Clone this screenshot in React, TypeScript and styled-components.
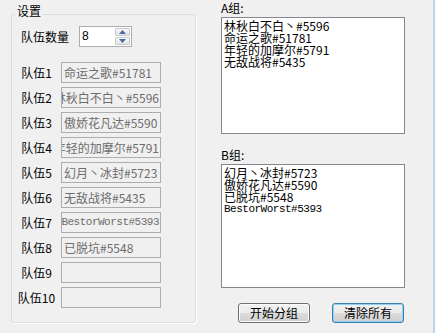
import React from 'react'
import styled, { createGlobalStyle } from 'styled-components'

const GlobalStyle = createGlobalStyle`
  html, body {
    margin: 0;
    padding: 0;
    background: #f0f0f0;
  }
  body {
    font-family: "Noto Sans CJK SC", "Liberation Sans", sans-serif;
    font-size: 12px;
    color: #000;
  }
`

const teams = [
  { name: '命运之歌#51781' },
  { name: '林秋白不白丶#5596' },
  { name: '傲娇花凡达#5590' },
  { name: '年轻的加摩尔#5791' },
  { name: '幻月丶冰封#5723' },
  { name: '无敌战将#5435' },
  { name: 'BestorWorst#5393', latin: true },
  { name: '已脱坑#5548' },
  { name: '' },
  { name: '' },
]

const groupA = [
  { name: '林秋白不白丶#5596' },
  { name: '命运之歌#51781' },
  { name: '年轻的加摩尔#5791' },
  { name: '无敌战将#5435' },
]

const groupB = [
  { name: '幻月丶冰封#5723' },
  { name: '傲娇花凡达#5590' },
  { name: '已脱坑#5548' },
  { name: 'BestorWorst#5393', latin: true },
]

const latinFont = '"Liberation Mono", monospace'
const cjkFont = '"Noto Sans CJK SC", "Liberation Sans", sans-serif'

const Window = styled.div`
  display: flex;
  gap: 25px;
  width: 435px;
  height: 333px;
  box-sizing: border-box;
  padding-left: 11px;
  border-right: 2px solid #bcd4ec;
  background: #f0f0f0;
  overflow: hidden;
`

const Group = styled.fieldset`
  margin: 5px 0 0;
  padding: 0;
  width: 185px;
  height: 318px;
  box-sizing: border-box;
  min-width: 0;
  border: 1px solid #d5dfe5;
  border-radius: 3px;
  box-shadow: 1px 1px 0 #ffffff;
`

const Legend = styled.legend`
  margin-left: 3px;
  padding: 0 2px 6px;
  font-size: 12px;
  line-height: 12px;
`

const GroupBody = styled.div`
  display: flex;
  flex-direction: column;
  gap: 15px;
  padding-top: 3px;
`

const SpinRow = styled.div`
  display: flex;
  align-items: center;
  gap: 10px;
  padding-left: 9px;
  height: 21px;
`

const SpinBox = styled.div`
  display: flex;
  width: 53px;
  height: 21px;
  box-sizing: border-box;
  border: 1px solid #abadb3;
  background: #ffffff;
`

const SpinValue = styled.div`
  flex: 1;
  padding-left: 2px;
  font-family: "Liberation Sans", sans-serif;
  font-size: 12px;
  line-height: 18px;
`

const SpinButtons = styled.div`
  display: flex;
  flex-direction: column;
  gap: 1px;
  width: 15px;
  padding: 1px 1px 1px 0;
`

const SpinButton = styled.div`
  flex: 1;
  display: flex;
  align-items: center;
  justify-content: center;
  border: 1px solid #c9c9c9;
  border-radius: 1px;
  background: linear-gradient(#f7f7f7, #e4e4e4);
`

const TeamList = styled.div`
  display: flex;
  flex-direction: column;
  gap: 4px;
`

const TeamRow = styled.div`
  display: flex;
  align-items: center;
  height: 21px;
`

const TeamLabel = styled.div`
  width: 49px;
  text-align: center;
  line-height: 14px;
`

const TeamField = styled.div<{ $latin?: boolean }>`
  display: flex;
  justify-content: flex-end;
  width: 100px;
  height: 21px;
  box-sizing: border-box;
  padding: 0 1px 0 2px;
  border: 1px solid #adadad;
  background: #f0f0f0;
  color: #6d6d6d;
  overflow: hidden;
  white-space: nowrap;
  font-family: ${p => (p.$latin ? latinFont : cjkFont)};
  font-size: ${p => (p.$latin ? 11 : 12)}px;
  letter-spacing: ${p => (p.$latin ? '-0.5px' : 'normal')};
  line-height: 19px;
`

const FieldText = styled.span`
  flex-shrink: 0;
`

const FieldSpacer = styled.span`
  flex: 1 1 0;
  min-width: 0;
`

const RightPane = styled.div`
  display: flex;
  flex-direction: column;
  width: 184px;
  padding-top: 2px;
`

const ListLabel = styled.div<{ $top?: number }>`
  margin-top: ${p => p.$top ?? 0}px;
  margin-bottom: 3px;
  line-height: 12px;
`

const ListBox = styled.div<{ $height: number }>`
  height: ${p => p.$height}px;
  box-sizing: border-box;
  padding: 2px 2px;
  border: 1px solid #828790;
  background: #ffffff;
`

const ListItem = styled.div<{ $latin?: boolean }>`
  height: 12px;
  line-height: 12px;
  white-space: nowrap;
  font-family: ${p => (p.$latin ? latinFont : cjkFont)};
  font-size: ${p => (p.$latin ? 11 : 12)}px;
  letter-spacing: ${p => (p.$latin ? '-0.5px' : 'normal')};
`

const ButtonRow = styled.div`
  display: flex;
  gap: 22px;
  margin-top: 15px;
  padding-left: 17px;
`

const Button = styled.button<{ $focused?: boolean }>`
  width: 72px;
  height: 20px;
  padding: 0;
  border: 1px solid ${p => (p.$focused ? '#3c7fb1' : '#707070')};
  border-radius: 3px;
  background: linear-gradient(#f2f2f2 0%, #ebebeb 50%, #dddddd 50%, #cfcfcf 100%);
  box-shadow: ${p => (p.$focused ? 'inset 0 0 0 1px #8ed0f2' : 'inset 0 0 0 1px #fcfcfc')};
  font-family: "Noto Sans CJK SC", sans-serif;
  font-size: 12px;
  line-height: 16px;
  color: #000;
`

const Arrow = ({ up }: { up?: boolean }) => (
  <svg width="7" height="4" viewBox="0 0 7 4">
    <path d={up ? 'M0 4 L3.5 0 L7 4 Z' : 'M0 0 L3.5 4 L7 0 Z'} fill="#4a6aa5" />
  </svg>
)

export default function App() {
  return (
    <Window>
      <GlobalStyle />
      <Group>
        <Legend>设置</Legend>
        <GroupBody>
          <SpinRow>
            <span>队伍数量</span>
            <SpinBox>
              <SpinValue>8</SpinValue>
              <SpinButtons>
                <SpinButton><Arrow up /></SpinButton>
                <SpinButton><Arrow /></SpinButton>
              </SpinButtons>
            </SpinBox>
          </SpinRow>
          <TeamList>
            {teams.map((t, i) => (
              <TeamRow key={i}>
                <TeamLabel>队伍{i + 1}</TeamLabel>
                <TeamField $latin={t.latin}>
                  <FieldText>{t.name}</FieldText>
                  <FieldSpacer />
                </TeamField>
              </TeamRow>
            ))}
          </TeamList>
        </GroupBody>
      </Group>
      <RightPane>
        <ListLabel>A组:</ListLabel>
        <ListBox $height={117}>
          {groupA.map((t, i) => (
            <ListItem key={i} $latin={t.latin}>{t.name}</ListItem>
          ))}
        </ListBox>
        <ListLabel $top={15}>B组:</ListLabel>
        <ListBox $height={124}>
          {groupB.map((t, i) => (
            <ListItem key={i} $latin={t.latin}>{t.name}</ListItem>
          ))}
        </ListBox>
        <ButtonRow>
          <Button>开始分组</Button>
          <Button $focused>清除所有</Button>
        </ButtonRow>
      </RightPane>
    </Window>
  )
}
